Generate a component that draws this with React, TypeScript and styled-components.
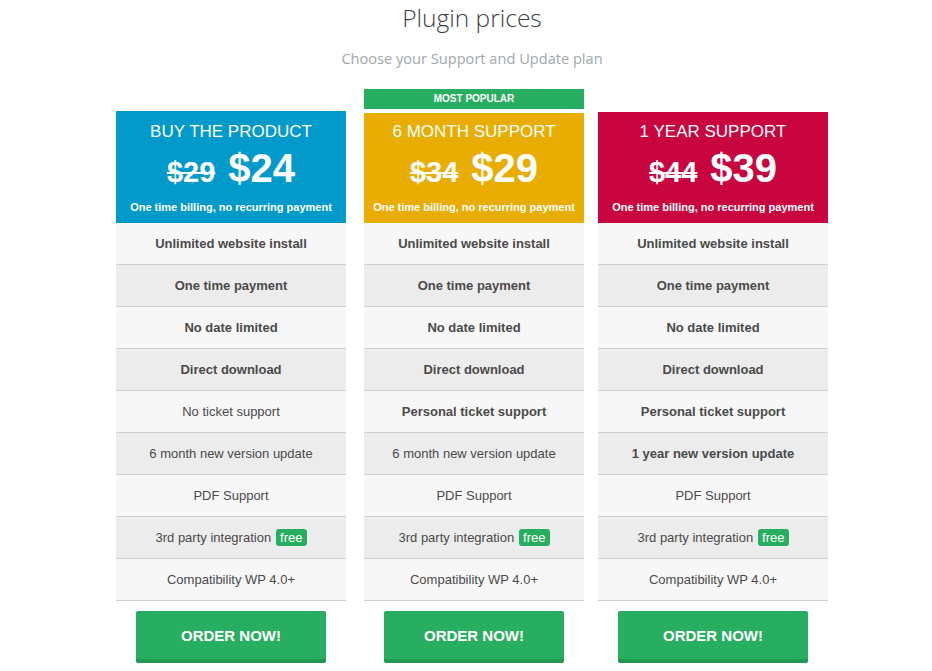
import React from "react";
import styled, { createGlobalStyle } from "styled-components";

const Global = createGlobalStyle`
  html, body { margin: 0; padding: 0; background: #fff; }
  body { font-family: "Liberation Sans", Arial, sans-serif; }
`;

const Page = styled.div`
  width: 712px;
  margin-left: 116px;
  display: flex;
  flex-direction: column;
  align-items: stretch;
`;

const Title = styled.h1`
  margin: 2px 0 0;
  font-family: "Open Sans", sans-serif;
  font-weight: 300;
  font-size: 24.5px;
  line-height: 31px;
  color: #3b3f47;
  text-align: center;
`;

const Subtitle = styled.p`
  margin: 15px 0 0;
  font-family: "Open Sans", sans-serif;
  font-size: 14.6px;
  line-height: 20px;
  color: #a1a8aa;
  text-align: center;
`;

const Columns = styled.div`
  display: flex;
  align-items: flex-start;
  margin-top: 21px;
`;

const Column = styled.div<{ $w: number; $ml?: number; $mr?: number; $top: number }>`
  width: ${(p) => p.$w}px;
  margin-left: ${(p) => p.$ml ?? 0}px;
  margin-right: ${(p) => p.$mr ?? 0}px;
  padding-top: ${(p) => p.$top}px;
  display: flex;
  flex-direction: column;
  align-items: center;
`;

const Banner = styled.div`
  width: 100%;
  height: 20px;
  background: #27ae60;
  color: #fff;
  font-size: 10px;
  font-weight: 700;
  line-height: 20px;
  text-align: center;
  margin-bottom: 4px;
`;

const Header = styled.div<{ $bg: string; $h: number }>`
  width: 100%;
  height: ${(p) => p.$h}px;
  background: ${(p) => p.$bg};
  color: #fff;
  display: flex;
  flex-direction: column;
  align-items: center;
  justify-content: flex-end;
  padding-bottom: 9px;
  box-sizing: border-box;
`;

const PlanName = styled.div`
  font-size: 17px;
  line-height: 22px;
`;

const PriceRow = styled.div`
  display: flex;
  align-items: baseline;
  gap: 13px;
  margin-top: 3px;
  height: 42px;
`;

const OldPrice = styled.span`
  font-size: 29px;
  font-weight: 700;
  text-decoration: line-through;
  text-decoration-thickness: 2px;
`;

const NewPrice = styled.span`
  font-size: 40px;
  font-weight: 700;
`;

const Billing = styled.div`
  font-size: 11px;
  font-weight: 700;
  line-height: 14px;
  margin-top: 12px;
`;

const Row = styled.div<{ $alt: boolean; $bold: boolean }>`
  width: 100%;
  height: 42px;
  box-sizing: border-box;
  border-bottom: 1px solid #cfcfcf;
  background: ${(p) => (p.$alt ? "#ececec" : "#f7f7f7")};
  display: flex;
  align-items: center;
  justify-content: center;
  font-size: 13px;
  font-weight: ${(p) => (p.$bold ? 700 : 400)};
  color: #4a4a4a;
`;

const Free = styled.span`
  background: #27ae60;
  color: #fff;
  border-radius: 3px;
  padding: 1px 4px;
  margin-left: 5px;
  font-size: 13px;
  line-height: 15px;
`;

const OrderButton = styled.button`
  margin-top: 10px;
  width: calc(100% - 40px);
  height: 52px;
  border: none;
  border-bottom: 4px solid #1f9b51;
  border-radius: 2px;
  background: #28ae60;
  color: #fff;
  font-family: "Liberation Sans", Arial, sans-serif;
  font-size: 15px;
  font-weight: 700;
  padding-top: 2px;
  cursor: pointer;
`;

type Feature = { text: string; bold?: boolean; free?: boolean };

type Plan = {
  name: string;
  old: string;
  price: string;
  bg: string;
  width: number;
  ml?: number;
  mr?: number;
  top: number;
  headH: number;
  popular?: boolean;
  features: Feature[];
};

const common = (ticket: Feature, update: Feature): Feature[] => [
  { text: "Unlimited website install", bold: true },
  { text: "One time payment", bold: true },
  { text: "No date limited", bold: true },
  { text: "Direct download", bold: true },
  ticket,
  update,
  { text: "PDF Support" },
  { text: "3rd party integration", free: true },
  { text: "Compatibility WP 4.0+" },
];

const plans: Plan[] = [
  {
    name: "BUY THE PRODUCT",
    old: "$29",
    price: "$24",
    bg: "#0299cb",
    width: 230,
    top: 22,
    headH: 112,
    features: common({ text: "No ticket support" }, { text: "6 month new version update" }),
  },
  {
    name: "6 MONTH SUPPORT",
    old: "$34",
    price: "$29",
    bg: "#e8ad00",
    width: 220,
    ml: 18,
    mr: 14,
    top: 0,
    headH: 110,
    popular: true,
    features: common(
      { text: "Personal ticket support", bold: true },
      { text: "6 month new version update" }
    ),
  },
  {
    name: "1 YEAR SUPPORT",
    old: "$44",
    price: "$39",
    bg: "#c8053f",
    width: 230,
    top: 23,
    headH: 111,
    features: common(
      { text: "Personal ticket support", bold: true },
      { text: "1 year new version update", bold: true }
    ),
  },
];

export default function App() {
  return (
    <>
      <Global />
      <Page>
        <Title>Plugin prices</Title>
        <Subtitle>Choose your Support and Update plan</Subtitle>
        <Columns>
          {plans.map((p) => (
            <Column key={p.name} $w={p.width} $ml={p.ml} $mr={p.mr} $top={p.top}>
              {p.popular && <Banner>MOST POPULAR</Banner>}
              <Header $bg={p.bg} $h={p.headH}>
                <PlanName>{p.name}</PlanName>
                <PriceRow>
                  <OldPrice>{p.old}</OldPrice>
                  <NewPrice>{p.price}</NewPrice>
                </PriceRow>
                <Billing>One time billing, no recurring payment</Billing>
              </Header>
              {p.features.map((f, i) => (
                <Row key={i} $alt={i % 2 === 1} $bold={!!f.bold}>
                  {f.text}
                  {f.free && <Free>free</Free>}
                </Row>
              ))}
              <OrderButton>ORDER NOW!</OrderButton>
            </Column>
          ))}
        </Columns>
      </Page>
    </>
  );
}
